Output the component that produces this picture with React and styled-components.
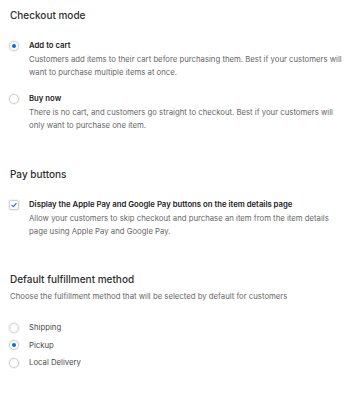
import React from 'react'
import styled, { createGlobalStyle } from 'styled-components'

const GlobalStyle = createGlobalStyle`
  body {
    margin: 0;
    background: #fff;
    font-family: Inter, "Liberation Sans", sans-serif;
    -webkit-font-smoothing: antialiased;
  }
`

const Page = styled.div`
  padding: 7px 10px 0 9px;
  width: 357px;
  box-sizing: border-box;
`

const Section = styled.section`
  margin-bottom: ${p => p.$after || 0}px;
`

const Heading = styled.h2`
  margin: 0 0 0 1px;
  font-size: 10px;
  line-height: 16px;
  font-weight: 500;
  color: #2e2e2e;
`

const Sub = styled.p`
  margin: 3px 0 0 1px;
  font-size: 7.75px;
  line-height: 13px;
  color: #666;
`

const Options = styled.div`
  display: flex;
  flex-direction: column;
  gap: ${p => p.$gap}px;
  margin-top: ${p => p.$top}px;
`

const Option = styled.div`
  display: flex;
  align-items: flex-start;
  gap: 10px;
`

const Control = styled.span`
  flex: none;
  width: 10px;
  height: 10px;
  margin-top: 1.5px;
  box-sizing: border-box;
  border: 1px solid #d2d2d2;
  border-radius: ${p => (p.$box ? '2px' : '50%')};
  display: flex;
  align-items: center;
  justify-content: center;
  background: #fff;
  box-shadow: 0 0 0 1px #f2f2f2;
`

const Dot = styled.span`
  width: 4px;
  height: 4px;
  border-radius: 50%;
  background: #006aff;
`

const Body = styled.div`
  display: flex;
  flex-direction: column;
`

const Label = styled.div`
  font-size: 7.75px;
  line-height: 13px;
  font-weight: ${p => (p.$plain ? 400 : 600)};
  color: ${p => (p.$plain ? '#4a4a4a' : '#222')};
`

const Desc = styled.div`
  margin-top: 1px;
  font-size: 7.75px;
  line-height: 13px;
  color: #666;
`

const Check = () => (
  <svg width="6" height="6" viewBox="0 0 10 10">
    <path d="M1.5 5.5 L4 7.8 L8.6 2.4" fill="none" stroke="#006aff" strokeWidth="1.7" strokeLinecap="round" strokeLinejoin="round" />
  </svg>
)

const Choice = ({ checked, box, label, desc, plain }) => (
  <Option>
    <Control $box={box}>
      {checked && (box ? <Check /> : <Dot />)}
    </Control>
    <Body>
      <Label $plain={plain}>{label}</Label>
      {desc && <Desc>{desc}</Desc>}
    </Body>
  </Option>
)

export default function App() {
  return (
    <>
      <GlobalStyle />
      <Page>
        <Section $after={34}>
          <Heading>Checkout mode</Heading>
          <Options $top={16} $gap={13}>
            <Choice
              checked
              label="Add to cart"
              desc="Customers add items to their cart before purchasing them. Best if your customers will want to purchase multiple items at once."
            />
            <Choice
              label="Buy now"
              desc="There is no cart, and customers go straight to checkout. Best if your customers will only want to purchase one item."
            />
          </Options>
        </Section>
        <Section $after={33}>
          <Heading>Pay buttons</Heading>
          <Options $top={16} $gap={13}>
            <Choice
              checked
              box
              label="Display the Apple Pay and Google Pay buttons on the item details page"
              desc="Allow your customers to skip checkout and purchase an item from the item details page using Apple Pay and Google Pay."
            />
          </Options>
        </Section>
        <Section>
          <Heading>Default fulfillment method</Heading>
          <Sub>Choose the fulfillment method that will be selected by default for customers</Sub>
          <Options $top={18} $gap={4.5}>
            <Choice plain label="Shipping" />
            <Choice plain checked label="Pickup" />
            <Choice plain label="Local Delivery" />
          </Options>
        </Section>
      </Page>
    </>
  )
}
